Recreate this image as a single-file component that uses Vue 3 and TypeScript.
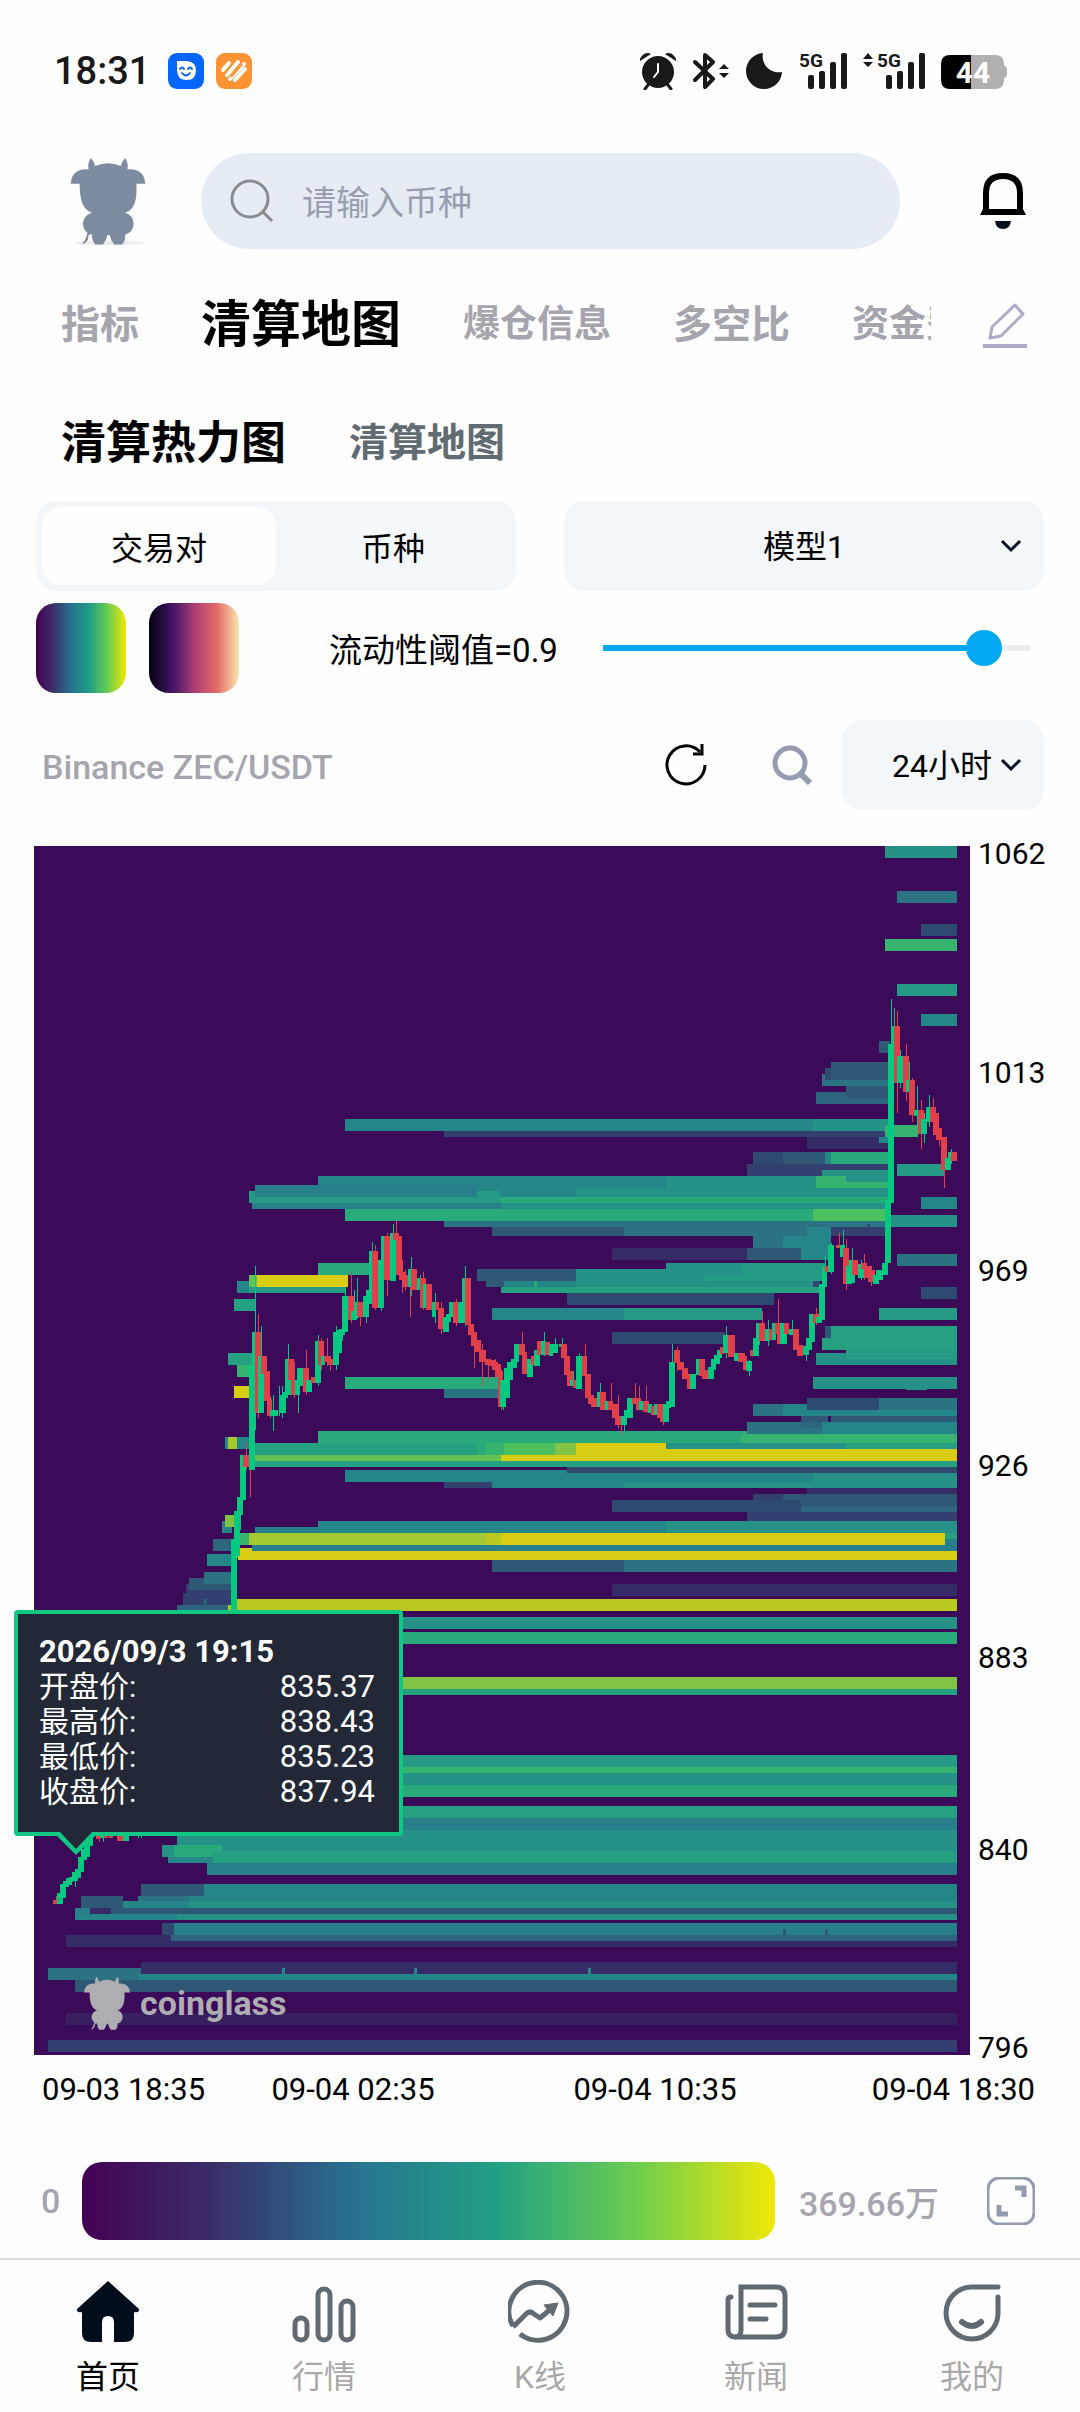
<script setup lang="ts">
import { computed, ref } from 'vue'

type Band = { x: number; y: number; w: number; h: number; fill: string }
type Candle = { x: number; w: number; top: number; bottom: number; high: number; low: number; fill: string }

const cow =
  'M36 2Q42 8 44 16Q67 6 90 16Q92 8 98 2Q104 12 102 22Q132 20 134 48L118 48Q120 80 110 92Q104 99 98 100Q112 104 113 120Q112 136 98 139Q98 152 92 157L78 157Q72 150 70 140L66 140Q64 150 58 157L44 157Q38 150 38 139Q32 138 32 142Q32 154 20 157Q28 148 30 136Q22 130 22 118Q24 104 38 100Q32 99 26 92Q16 80 16 48L0 48Q2 20 32 22Q30 12 36 2Z'

const palette: Record<string, string> = {
  z: '#381f60', a: '#352b66', b: '#333f6f', c: '#2f4a70', d: '#2e5876', D: '#2c657d', e: '#2b7283',
  f: '#277f8b', g: '#25868a', h: '#269186', H: '#259a84', i: '#25a181', j: '#28aa7a', k: '#36b36e',
  l: '#4cc05e', L: '#64c156', m: '#82c346', n: '#a3c832', o: '#b9c820', y: '#d8cd12',
}

// level, left, right, top, bottom
const bandSource = `
h 885 957 846 858;e 897 957 891 903;c 921 957 924 936;k 885 957 939 951;H 897 957 984 996;g 921 957 1014 1026
d 879 890 1041 1053;e 822 890 1074 1086;c 825 890 1068 1080;d 831 890 1062 1080;D 816 890 1092 1104;d 846 890 1086 1098
g 345 813 1119 1131;h 813 888 1119 1131;b 444 888 1131 1137;a 807 888 1137 1149;g 879 888 1137 1143;k 885 918 1125 1137
c 753 783 1152 1164;d 783 825 1152 1164;g 825 831 1152 1164;j 831 888 1152 1164;b 747 888 1164 1176;h 822 888 1170 1182
g 318 666 1176 1188;h 666 888 1176 1188;k 816 846 1176 1188;k 846 888 1182 1188
f 255 477 1185 1197;g 477 576 1188 1197;h 576 888 1188 1197;H 249 500 1191 1203;f 255 477 1185 1197;j 500 888 1197 1203
f 252 501 1203 1209;h 501 888 1203 1209;j 345 813 1209 1221;l 813 885 1209 1221
h 888 957 1215 1227;g 921 957 1197 1209;H 897 945 1164 1176
e 444 885 1221 1227;d 492 624 1227 1236;e 624 807 1227 1236;g 807 831 1227 1260;b 831 885 1227 1236;c 867 870 1224 1227
e 753 783 1236 1248;g 783 831 1236 1248;a 612 747 1248 1260;d 747 801 1248 1260;g 801 828 1248 1260
d 477 576 1269 1281;h 576 826 1269 1281;h 666 741 1263 1275;H 741 826 1263 1281;H 705 741 1275 1281
d 486 504 1281 1287;g 504 576 1281 1287;h 576 813 1281 1287;c 813 820 1281 1287;i 501 820 1287 1293;j 534 537 1281 1287
c 567 774 1293 1305;g 492 624 1308 1320;H 624 762 1308 1320;c 612 725 1332 1344
j 318 370 1263 1275;g 237 249 1281 1293;H 249 346 1287 1293;L 249 257 1275 1287;y 257 348 1275 1287;i 234 256 1299 1311
i 228 252 1353 1365;k 237 249 1365 1377;y 234 249 1386 1398;g 225 252 1437 1449;n 228 237 1437 1449
j 345 500 1377 1389;e 444 500 1389 1398
c 921 957 1287 1299;e 897 957 1254 1266;H 879 957 1308 1320;d 825 831 1326 1338;i 831 957 1326 1350;i 822 957 1338 1350
h 816 957 1353 1365;H 846 957 1350 1359;h 813 957 1377 1389;h 906 927 1389 1390
e 753 783 1404 1416;g 783 957 1404 1416;c 807 879 1398 1410;e 879 957 1398 1410
d 801 828 1416 1428;d 831 957 1416 1422;e 747 822 1422 1434;D 801 825 1422 1428;g 822 957 1422 1434
j 318 747 1431 1443;k 741 957 1434 1443;i 255 477 1443 1455;j 477 486 1443 1455;k 486 504 1443 1455;l 504 555 1443 1455
m 555 576 1443 1455;y 576 666 1443 1461;h 666 846 1443 1449;i 846 957 1443 1449;L 255 501 1455 1461;y 501 666 1455 1461
y 666 957 1449 1461;i 255 957 1461 1467
g 345 567 1470 1482;c 567 957 1467 1473;g 567 813 1473 1482;h 813 957 1473 1482;b 444 492 1482 1488;g 492 624 1482 1488;h 624 957 1482 1488
a 807 957 1488 1494;b 753 783 1494 1506;d 783 957 1494 1506;c 612 801 1500 1512;D 801 957 1506 1512;b 747 957 1512 1521
g 318 666 1521 1533;h 666 957 1521 1533;f 255 318 1527 1533;k 240 249 1533 1545;n 249 486 1533 1545;o 486 501 1533 1545
y 501 945 1533 1545;i 945 957 1533 1539;f 945 957 1539 1551;f 252 945 1545 1551;y 238 252 1548 1560;y 252 957 1551 1560
d 492 624 1560 1572;e 624 957 1560 1572;a 612 957 1584 1596;o 228 957 1599 1611
h 300 957 1617 1629;j 300 957 1632 1644;m 300 957 1677 1689;i 300 957 1689 1695
H 300 957 1755 1767;k 300 957 1767 1773;h 300 957 1773 1785;j 300 957 1785 1797
i 300 957 1806 1818;f 300 957 1818 1830;d 300 957 1830 1836;h 177 957 1830 1851;h 162 177 1845 1857;j 174 222 1845 1857;i 213 957 1851 1863;g 168 213 1857 1863
f 207 957 1863 1875;g 141 957 1884 1902;d 141 204 1884 1896;e 138 189 1896 1902;h 183 957 1902 1908;d 81 123 1896 1908
g 123 189 1901 1908;f 75 90 1908 1914;a 90 111 1908 1914;d 111 957 1908 1914;g 75 177 1914 1920;h 177 957 1914 1920
c 162 174 1923 1935;f 174 957 1923 1935;d 783 786 1929 1935;d 825 828 1929 1935;D 171 957 1935 1941;a 66 171 1935 1947;a 171 957 1941 1947
a 141 957 1962 1974;e 48 141 1968 1980;g 138 957 1974 1980;g 282 285 1968 1974;g 414 417 1968 1974;g 588 591 1968 1974
d 75 957 1980 1992;z 66 957 2013 2025;b 48 957 2040 2052
g 222 232 1521 1533;m 225 234 1515 1527;D 213 231 1539 1551;g 207 231 1554 1566;b 186 231 1584 1596;d 189 231 1578 1590;e 204 231 1572 1584
b 183 231 1593 1605;D 177 228 1605 1612;D 204 207 1599 1605
`

const bands: Band[] = bandSource
  .trim()
  .split(/[;\n]/)
  .map((row) => {
    const [level, left, right, top, bottom] = row.split(' ')
    return { x: +left, y: +top, w: +right - +left, h: +bottom - +top, fill: palette[level] }
  })

// direction, left, right, body top, body bottom, wick top, wick bottom
const candleSource = `
r 53 57 1900 1904 1896 1904;g 57 63 1893 1904;g 60 66 1884 1898;g 63 69 1881 1887;g 66 72 1878 1885;g 69 75 1877 1881 1872 1882;g 72 78 1872 1881 1869 1887;g 75 81 1869 1878
g 78 84 1857 1872;g 81 87 1849 1860;g 84 90 1840 1857;g 87 93 1836 1846;r 96 100 1836 1839 1835 1842;g 100 104 1835 1838 1834 1842;r 104 107 1835 1838;r 109 112 1835 1838;r 117 123 1835 1841;g 123 129 1835 1841;g 138 139 1835 1838
g 231 237 1539 1612;g 234 240 1511 1556 1497 1558;g 237 243 1497 1515 1497 1530;g 240 246 1455 1500;r 243 249 1455 1467 1442 1470;r 247 252 1460 1467 1455 1497;g 249 255 1365 1470
g 252 258 1332 1413 1266 1430;r 255 261 1332 1413 1314 1418;g 258 264 1356 1413 1326 1413;r 261 267 1356 1374;r 264 270 1371 1401;r 267 272 1399 1416 1396 1418
g 270 277 1410 1416 1395 1431;g 276 278 1410 1416 1386 1416;g 279 286 1395 1413 1386 1418;g 282 288 1392 1398;g 285 291 1359 1395 1344 1395;r 288 294 1359 1380;r 291 297 1380 1395 1362 1398
g 295 300 1380 1395 1374 1413;g 297 303 1368 1386;r 303 309 1368 1392 1350 1395;g 306 312 1380 1392;r 311 315 1377 1383;g 315 321 1341 1383 1335 1386;r 318 324 1341 1365 1338 1370;g 321 325 1356 1365
r 324 330 1356 1362 1338 1366;r 327 333 1359 1365 1356 1371;g 333 339 1332 1365 1326 1370;g 336 342 1330 1353;g 339 345 1329 1335 1326 1341;g 342 348 1296 1332 1287 1332
r 348 354 1296 1320 1272 1323;g 351 357 1311 1320 1290 1320;g 354 359 1302 1318 1278 1318;r 357 363 1302 1317 1302 1326;g 363 369 1296 1317 1296 1323;g 366 372 1290 1304
g 369 375 1251 1300 1242 1300;r 372 378 1251 1308 1245 1310;g 378 384 1260 1308 1258 1311;g 381 387 1236 1264;r 384 390 1236 1280 1233 1296;g 390 396 1233 1281 1224 1281;r 393 399 1233 1240 1221 1240
r 396 402 1236 1275;r 399 405 1272 1280 1260 1293;r 402 408 1275 1287 1270 1290;r 407 410 1278 1287 1278 1317;g 408 413 1269 1287 1257 1296;r 411 417 1269 1290;g 417 421 1278 1290 1275 1290
r 420 426 1278 1308 1272 1310;g 423 428 1284 1308;r 426 432 1284 1310;g 432 436 1302 1317 1293 1323;r 435 439 1302 1310;r 438 444 1308 1329 1302 1334;g 443 449 1317 1332;g 446 451 1314 1322
g 449 455 1302 1317;r 453 459 1302 1323 1299 1326;g 458 464 1302 1323;g 462 468 1278 1323 1266 1326;r 465 471 1278 1325;r 468 474 1324 1335;r 471 477 1332 1346 1332 1368;r 475 481 1340 1352
r 479 486 1350 1362 1344 1386;r 485 491 1359 1365 1359 1380;r 489 495 1360 1366;r 492 498 1362 1370 1359 1378;r 495 501 1364 1377;r 498 503 1371 1407 1370 1410;g 500 506 1380 1407 1380 1410
g 504 510 1368 1398;g 507 513 1362 1380;g 511 517 1359 1368;g 514 519 1344 1362;r 519 525 1344 1355 1332 1368;r 522 527 1352 1374;g 527 533 1359 1377;r 531 534 1356 1365;g 534 540 1350 1366;r 537 543 1341 1355
g 541 546 1341 1355 1332 1356;r 545 550 1342 1355;g 549 553 1344 1356;g 552 558 1344 1353 1338 1353;g 559 563 1344 1347 1338 1350;r 561 567 1344 1358;r 564 570 1356 1375;r 567 573 1371 1386
g 570 574 1380 1386 1371 1386;r 573 577 1380 1388;g 576 582 1356 1389 1353 1389;g 579 584 1356 1372;r 582 587 1356 1376 1344 1380;r 585 591 1374 1398;r 588 594 1395 1404;r 591 597 1398 1407
g 597 602 1392 1407 1383 1407;r 600 606 1392 1410;g 605 609 1401 1410;r 608 613 1401 1410 1383 1410;r 612 618 1404 1418;r 615 621 1416 1425 1395 1428;r 618 622 1416 1425 1416 1434;g 621 627 1416 1425 1410 1431
g 625 632 1410 1418;g 627 633 1398 1418;r 632 638 1398 1404 1383 1404;r 636 641 1398 1410 1386 1410;g 639 644 1401 1410;r 643 649 1401 1412 1386 1413;g 648 652 1404 1413;r 651 656 1406 1415
g 654 657 1404 1415;r 657 663 1404 1418;r 660 665 1410 1422 1404 1425;g 663 669 1404 1422;g 666 671 1401 1408;g 669 675 1362 1407 1344 1407;r 674 680 1350 1363 1347 1371;r 678 684 1362 1370
r 682 688 1368 1379;r 687 692 1374 1389;g 690 696 1374 1389;g 696 701 1359 1375;r 699 705 1359 1376;r 702 708 1370 1379;g 708 714 1367 1379;g 711 716 1359 1370;g 714 720 1355 1364
g 717 722 1350 1358;r 720 724 1347 1354;g 723 729 1335 1353 1326 1358;r 728 735 1335 1357;g 734 738 1353 1361;r 738 745 1353 1362;r 743 747 1356 1370;g 746 752 1361 1371 1360 1376;r 750 753 1350 1356
g 753 759 1338 1356;g 756 760 1323 1345;r 759 765 1323 1341 1311 1341;g 765 770 1329 1341 1320 1346;r 769 773 1329 1340;g 772 776 1323 1340;r 775 779 1323 1334 1299 1344;r 777 783 1323 1344
g 780 787 1323 1344;r 784 789 1323 1334;g 789 794 1329 1335 1320 1335;r 793 799 1329 1350;r 797 803 1345 1356;g 803 809 1346 1355 1340 1361;g 806 812 1338 1350;g 809 815 1314 1342
r 813 819 1314 1323 1308 1325;g 816 822 1317 1323;g 819 825 1284 1320;g 822 827 1266 1287 1255 1287;r 825 829 1266 1272;g 828 834 1245 1272 1243 1274;r 836 843 1245 1248 1233 1248;g 840 845 1245 1257 1230 1257
r 843 849 1248 1284 1239 1290;g 846 852 1266 1284;g 849 855 1260 1283 1248 1283;r 852 858 1260 1275;g 858 864 1264 1278 1260 1280;r 861 867 1263 1269 1254 1280;r 864 872 1266 1278;r 868 875 1270 1282 1268 1286
g 873 879 1275 1284;g 876 883 1270 1280;g 882 888 1263 1275;g 885 891 1200 1263;g 888 894 1044 1203 999 1203;g 891 897 1026 1044 1008 1044;r 894 900 1026 1083 1011 1113;g 897 903 1056 1083 1050 1088
r 903 909 1056 1092 1044 1101;g 906 910 1080 1092 1062 1092;r 909 915 1080 1115 1078 1122;g 914 918 1110 1116 1086 1125;r 918 924 1110 1134 1100 1149;g 921 927 1119 1134 1113 1143;g 926 932 1107 1122 1095 1127
r 930 936 1107 1122 1098 1129;r 933 939 1113 1135;r 936 942 1128 1140 1128 1146;r 941 947 1137 1170 1137 1188;g 945 951 1158 1170;g 948 954 1152 1158 1149 1164;r 951 957 1152 1161
`

const candles: Candle[] = candleSource
  .trim()
  .split(/[;\n]/)
  .map((row) => {
    const [direction, ...values] = row.split(' ')
    const [left, right, top, bottom, high = top, low = bottom] = values.map(Number)
    return { x: left, w: right - left, top, bottom, high, low, fill: direction === 'g' ? '#05c981' : '#e0404a' }
  })

const prices = [
  { label: '1062', y: 864 },
  { label: '1013', y: 1083 },
  { label: '969', y: 1281 },
  { label: '926', y: 1476 },
  { label: '883', y: 1668 },
  { label: '840', y: 1860 },
  { label: '796', y: 2058 },
]

const times = [
  { label: '09-03 18:35', x: 42, anchor: 'start' },
  { label: '09-04 02:35', x: 353, anchor: 'middle' },
  { label: '09-04 10:35', x: 655, anchor: 'middle' },
  { label: '09-04 18:30', x: 1035, anchor: 'end' },
]

const tooltip = [
  { label: '开盘价:', value: '835.37' },
  { label: '最高价:', value: '838.43' },
  { label: '最低价:', value: '835.23' },
  { label: '收盘价:', value: '837.94' },
]

const mode = ref('pair')
const model = ref('1')
const period = ref('24')
const threshold = ref(0.9)
const trackFill = computed(() => `${Math.round(threshold.value * 100)}%`)
</script>

<template>
  <div class="page">
    <div class="status">
      <span class="clock">18:31</span>
      <svg class="app-icon" viewBox="0 0 36 36" aria-hidden="true">
        <rect width="36" height="36" rx="9" fill="#0564fa" />
        <path d="M9 8H19Q28 9 28 17Q28 27 19 27Q9 27 9 17Z" fill="#fff" />
        <path d="M12 16Q14 13 16 16M20 16Q22 13 24 16M14 20Q18 25 22 20" fill="none" stroke="#0564fa" stroke-width="2" stroke-linecap="round" />
      </svg>
      <svg class="app-icon" viewBox="0 0 36 36" aria-hidden="true">
        <rect width="36" height="36" rx="9" fill="#ff9232" />
        <path d="M7 17L13 10M11 22L22 9M14 26L28 11M19 27L29 16" fill="none" stroke="#fff" stroke-width="4" stroke-linecap="round" />
        <path d="M9 20L17 10M15 24L26 11" fill="none" stroke="#ff9232" stroke-width="2" />
      </svg>
      <div class="status-icons" aria-hidden="true">
        <svg width="38" height="38" viewBox="0 0 38 38" fill="#191919">
          <circle cx="19" cy="20" r="16" />
          <path d="M1 9Q0 6 5 2Q9 0 12 2ZM37 9Q38 6 33 2Q29 0 26 2Z" />
          <path d="M9 33L6 37M29 33L32 37" stroke="#191919" stroke-width="3" stroke-linecap="round" />
          <path d="M19 12V20L15 25" fill="none" stroke="#fff" stroke-width="2" stroke-linecap="round" />
        </svg>
        <svg width="36" height="38" viewBox="0 0 36 38">
          <path d="M2 10L20 27L12 35V3L20 10L2 28" fill="none" stroke="#191919" stroke-width="4" stroke-linejoin="round" stroke-linecap="round" />
          <path d="M31 12L36 17H26ZM31 26L26 21H36Z" fill="#191919" />
        </svg>
        <svg width="38" height="38" viewBox="0 0 38 38"><path d="M18 1A16 16 0 0 0 37 20A18 18 0 1 1 18 1Z" fill="#191919" /></svg>
        <svg width="48" height="46" viewBox="0 -4 48 46" fill="#191919">
          <text class="net" x="0" y="15">5G</text>
          <rect x="9" y="23" width="6" height="14" rx="2" /><rect x="20" y="19" width="6" height="18" rx="2" />
          <rect x="31" y="10" width="6" height="27" rx="2" /><rect x="42" y="1" width="6" height="36" rx="2" />
        </svg>
        <svg width="62" height="46" viewBox="0 -4 62 46" fill="#191919">
          <path d="M5 1L10 7H0ZM5 15L0 10H10Z" />
          <text class="net" x="14" y="15">5G</text>
          <rect x="23" y="23" width="6" height="14" rx="2" /><rect x="34" y="19" width="6" height="18" rx="2" />
          <rect x="45" y="10" width="6" height="27" rx="2" /><rect x="56" y="1" width="6" height="36" rx="2" />
        </svg>
        <svg width="66" height="38" viewBox="0 0 66 38">
          <path d="M30 3H54Q63 3 63 12V14Q66 14 66 18V22Q66 25 63 26V28Q63 37 54 37H30Z" fill="#b0b0b0" />
          <path d="M30 3H9Q0 3 0 12V28Q0 37 9 37H30Z" fill="#000" />
          <text class="charge" x="32" y="31" text-anchor="middle">44</text>
        </svg>
      </div>
    </div>

    <header class="header">
      <svg class="logo" viewBox="0 0 134 158" aria-hidden="true">
        <ellipse cx="70" cy="154" rx="64" ry="4" fill="#ececec" />
        <path :d="cow" fill="#7e8aa0" />
      </svg>
      <label class="search">
        <svg width="44" height="44" viewBox="0 0 44 44" aria-hidden="true">
          <circle cx="20" cy="20" r="18" fill="none" stroke="#8b8b8b" stroke-width="3" />
          <path d="M33 33L42 42" stroke="#8b8b8b" stroke-width="3" />
        </svg>
        <input type="search" placeholder="请输入币种" aria-label="请输入币种" />
      </label>
      <button class="icon-button bell" aria-label="通知">
        <svg width="46" height="56" viewBox="0 0 46 56">
          <path d="M6 39V20Q6 3 23 3Q40 3 40 20V39" fill="none" stroke="#000" stroke-width="6" />
          <path d="M3 36H43L46 42H0Z" fill="#000" />
          <path d="M15 48H31Q30 56 23 56Q16 56 15 48Z" fill="#020d1d" />
        </svg>
      </button>
    </header>

    <nav class="tabs">
      <div class="tab-strip">
        <a href="#" class="tab">指标</a>
        <a href="#" class="tab active">清算地图</a>
        <a href="#" class="tab long">爆仓信息</a>
        <a href="#" class="tab">多空比</a>
        <a href="#" class="tab long">资金费率</a>
      </div>
      <button class="icon-button" aria-label="编辑">
        <svg width="46" height="48" viewBox="0 0 46 48" fill="none" stroke="#adabcb" stroke-width="3">
          <path d="M33 4L41 13L19 35L8 37L10 26Z" stroke-linejoin="round" />
          <path d="M1 45H45" stroke-width="4" />
        </svg>
      </button>
    </nav>

    <nav class="subtabs">
      <a href="#" class="subtab active">清算热力图</a>
      <a href="#" class="subtab">清算地图</a>
    </nav>

    <div class="controls">
      <div class="segment">
        <button :class="{ on: mode === 'pair' }" @click="mode = 'pair'">交易对</button>
        <button :class="{ on: mode === 'coin' }" @click="mode = 'coin'">币种</button>
      </div>
      <div class="picker model">
        <select v-model="model" aria-label="模型">
          <option value="1">模型1</option>
          <option value="2">模型2</option>
        </select>
        <svg width="22" height="14" viewBox="0 0 22 14" aria-hidden="true"><path d="M2 2L11 11L20 2" fill="none" stroke="#061024" stroke-width="3" /></svg>
      </div>
    </div>

    <div class="threshold">
      <button class="swatch viridis" aria-label="绿色配色"></button>
      <button class="swatch magma" aria-label="橙色配色"></button>
      <label for="threshold">流动性阈值={{ threshold }}</label>
      <input id="threshold" v-model.number="threshold" type="range" min="0" max="1" step="0.1" :style="{ '--fill': trackFill }" />
    </div>

    <div class="symbol">
      <span class="pair">Binance ZEC/USDT</span>
      <button class="icon-button" aria-label="刷新">
        <svg width="42" height="44" viewBox="0 0 42 44" fill="none" stroke="#000" stroke-width="3">
          <path d="M40 22A19 19 0 1 1 35 9" /><path d="M37 1V11H28" />
        </svg>
      </button>
      <button class="icon-button lens" aria-label="搜索">
        <svg width="40" height="40" viewBox="0 0 40 40" fill="none" stroke="#949ab0" stroke-width="5">
          <circle cx="18" cy="18" r="15" /><path d="M28 28L38 38" stroke-width="6" />
        </svg>
      </button>
      <div class="picker period">
        <select v-model="period" aria-label="周期">
          <option value="24">24小时</option>
          <option value="48">48小时</option>
        </select>
        <svg width="22" height="14" viewBox="0 0 22 14" aria-hidden="true"><path d="M2 2L11 11L20 2" fill="none" stroke="#061024" stroke-width="3" /></svg>
      </div>
    </div>

    <section class="chart">
      <svg class="plot" viewBox="0 822 1080 1292">
        <rect x="34" y="846" width="936" height="1209" fill="#3b0b59" />
        <g shape-rendering="crispEdges">
          <rect v-for="(band, i) in bands" :key="'b' + i" :x="band.x" :y="band.y" :width="band.w" :height="band.h" :fill="band.fill" />
          <template v-for="(candle, i) in candles" :key="'c' + i">
            <rect :x="candle.x + 3" :y="candle.high" width="1" :height="candle.low - candle.high" :fill="candle.fill" />
            <rect :x="candle.x" :y="candle.top" :width="candle.w" :height="candle.bottom - candle.top" :fill="candle.fill" />
          </template>
        </g>
        <svg x="84" y="1976" width="46" height="54" viewBox="0 0 134 158"><path :d="cow" fill="#aeadb1" /></svg>
        <text class="brand" x="140" y="2015">coinglass</text>
        <text v-for="price in prices" :key="price.label" class="price" x="978" :y="price.y">{{ price.label }}</text>
        <text v-for="time in times" :key="time.label" class="time" :x="time.x" y="2100" :text-anchor="time.anchor">{{ time.label }}</text>
      </svg>
      <div class="tooltip">
        <strong>2026/09/3 19:15</strong>
        <dl>
          <div v-for="row in tooltip" :key="row.label">
            <dt>{{ row.label }}</dt>
            <dd>{{ row.value }}</dd>
          </div>
        </dl>
        <svg class="pointer" width="38" height="23" viewBox="0 0 38 23" aria-hidden="true">
          <path d="M0 0H38V4L19 23L0 4Z" fill="#10c784" /><path d="M3 0H35L19 17Z" fill="#222836" />
        </svg>
      </div>
    </section>

    <div class="legend">
      <span>0</span>
      <div class="scale"></div>
      <span class="max">369.66万</span>
      <button class="icon-button" aria-label="全屏">
        <svg width="48" height="48" viewBox="0 0 48 48" fill="none" stroke="#949ab0">
          <rect x="1" y="1" width="46" height="46" rx="11" stroke-width="3" />
          <path d="M28 11H37V20M12 28V37H21" stroke-width="5" />
        </svg>
      </button>
    </div>

    <nav class="bottom">
      <a href="#" class="current">
        <svg width="64" height="64" viewBox="0 0 64 64" fill="#020d1b">
          <path d="M32 1L63 29Q64 33 58 32V53Q58 62 49 62H38V42Q38 36 32 36Q26 36 26 42V62H15Q6 62 6 53V32Q0 33 1 29Z" />
        </svg>
        <span>首页</span>
      </a>
      <a href="#">
        <svg width="64" height="64" viewBox="0 0 64 64" fill="none" stroke="#616a71" stroke-width="5">
          <rect x="3" y="38" width="12" height="22" rx="6" /><rect x="26" y="9" width="12" height="51" rx="6" /><rect x="49" y="21" width="12" height="39" rx="6" />
        </svg>
        <span>行情</span>
      </a>
      <a href="#">
        <svg width="64" height="64" viewBox="0 0 64 64" fill="none" stroke="#616a71" stroke-width="5" stroke-linejoin="round">
          <path d="M5 46A29 29 0 1 1 12 54" /><path d="M5 47L18 34Q22 30 26 34L32 38L44 28" />
          <path d="M36 25L50 23L45 36Z" fill="#616a71" stroke-width="1" />
        </svg>
        <span>K线</span>
      </a>
      <a href="#">
        <svg width="64" height="64" viewBox="0 0 64 64" fill="none" stroke="#616a71" stroke-width="5" stroke-linecap="round">
          <path d="M17 7H52Q61 7 61 16V48Q61 57 52 57H11Q17 57 17 50Z" /><path d="M12 57Q4 57 4 50V20Q4 17 7 17" /><path d="M26 25H51M26 39H42" />
        </svg>
        <span>新闻</span>
      </a>
      <a href="#">
        <svg width="64" height="64" viewBox="0 0 64 64" fill="none" stroke="#616a71" stroke-width="5" stroke-linecap="round">
          <path d="M58 7H31A26 26 0 1 0 58 34V17" /><path d="M22 42Q32 50 41 42" stroke-width="6" />
        </svg>
        <span>我的</span>
      </a>
    </nav>
  </div>
</template>

<style>
body {
  background: #fefefe;
}
</style>

<style scoped>
.page {
  font-family: Roboto, 'Noto Sans CJK SC', sans-serif;
  font-size: 32px;
  color: #000;
  background: #fefefe;
}
.page * {
  box-sizing: border-box;
}
a {
  text-decoration: none;
}
button,
input,
select {
  font: inherit;
  color: inherit;
  border: 0;
  background: none;
  padding: 0;
  margin: 0;
}
svg {
  display: block;
  flex: none;
}
.icon-button {
  display: flex;
  flex: none;
}
.status {
  display: flex;
  align-items: center;
  height: 141px;
  padding: 0 73px 0 54px;
}
.clock {
  font-size: 38px;
  font-weight: 500;
  color: #191919;
  margin-right: 18px;
}
.app-icon {
  width: 36px;
  height: 36px;
  margin-right: 12px;
}
.status-icons {
  display: flex;
  align-items: center;
  gap: 16px;
  margin-left: auto;
}
.net {
  font-size: 19px;
  font-weight: 700;
}
.charge {
  font-size: 30px;
  font-weight: 700;
  fill: #fff;
}
.header {
  display: flex;
  align-items: center;
  padding: 12px 54px 0 69px;
}
.logo {
  width: 78px;
  height: 88px;
}
.search {
  flex: 1;
  display: flex;
  align-items: center;
  height: 96px;
  margin: 0 80px 0 54px;
  padding: 0 29px;
  border-radius: 48px;
  background: #e5ecf4;
}
.search input {
  flex: 1;
  min-width: 0;
  margin-left: 28px;
  padding-top: 4px;
  font-size: 34px;
  outline: none;
}
.search input::placeholder {
  color: #989eaf;
  opacity: 1;
}
.tabs {
  display: flex;
  align-items: center;
  justify-content: space-between;
  height: 80px;
  margin-top: 36px;
  padding: 0 52px 0 61px;
}
.tab-strip {
  display: flex;
  align-items: center;
  gap: 62px;
  width: 870px;
  overflow: hidden;
}
.tab {
  flex: none;
  font-size: 39px;
  font-weight: 700;
  line-height: 72px;
  color: #a6a5ae;
}
.tab.long {
  font-size: 37px;
}
.tab.active {
  font-size: 50px;
  color: #000;
}
.subtabs {
  display: flex;
  align-items: center;
  gap: 63px;
  height: 100px;
  margin-top: 24px;
  padding: 0 61px;
  font-weight: 700;
}
.subtab {
  font-size: 39px;
  color: #616b72;
}
.subtab.active {
  font-size: 45px;
  color: #000;
}
.controls {
  display: grid;
  grid-template-columns: 1fr 1fr;
  gap: 48px;
  margin-top: 12px;
  padding: 0 36px;
}
.segment,
.picker {
  height: 90px;
  border-radius: 20px;
  background: #f3f7fa;
}
.segment {
  display: flex;
  padding: 6px;
}
.segment button {
  flex: 1;
  border-radius: 20px;
}
.segment button.on {
  background: #fefefe;
}
.picker {
  display: grid;
  align-items: center;
}
.picker select,
.picker svg {
  grid-area: 1 / 1;
}
.picker select {
  width: 100%;
  height: 90px;
  padding-top: 2px;
  appearance: none;
}
.picker svg {
  justify-self: end;
  margin-right: 22px;
  pointer-events: none;
}
.model select {
  text-align: center;
  text-align-last: center;
}
.threshold {
  display: flex;
  align-items: center;
  margin-top: 12px;
  padding: 0 36px;
}
.swatch {
  flex: none;
  width: 90px;
  height: 90px;
  border-radius: 20px;
}
.viridis,
.scale {
  background: linear-gradient(90deg, #440154, #3b2c68 18%, #277490 40%, #21a184 60%, #6ccd4f 80%, #f0e806);
}
.magma {
  margin-left: 23px;
  background: linear-gradient(90deg, #02020f, #45156b 27%, #b13f74 52%, #e46d69 76%, #fae5b0);
}
.threshold label {
  margin-left: 90px;
  font-size: 33px;
}
.threshold input {
  flex: 1;
  min-width: 0;
  margin-left: 32px;
  height: 40px;
  appearance: none;
  background: linear-gradient(90deg, #04a9f6 var(--fill), #ededed var(--fill)) center / calc(100% - 26px) 6px no-repeat;
}
.threshold input::-webkit-slider-thumb {
  appearance: none;
  width: 36px;
  height: 36px;
  border-radius: 50%;
  background: #04a9f6;
}
.symbol {
  display: flex;
  align-items: center;
  margin-top: 27px;
  padding: 0 36px 0 42px;
}
.pair {
  flex: 1;
  padding-top: 4px;
  font-size: 34px;
  font-weight: 500;
  color: #a6a5ae;
}
.lens {
  margin: 0 30px 0 65px;
}
.period {
  width: 202px;
}
.period select {
  padding-left: 50px;
}
.chart {
  position: relative;
  margin-top: 12px;
}
.plot {
  width: 100%;
  height: auto;
}
.price {
  font-size: 30px;
}
.time {
  font-size: 31px;
}
.brand {
  font-size: 34px;
  font-weight: 700;
  fill: #aeadb1;
}
.tooltip {
  position: absolute;
  top: 61%;
  left: 14px;
  width: 389px;
  padding: 20px 24px 23px 21px;
  border: 4px solid #10c784;
  border-radius: 4px;
  background: #222836;
  color: #fff;
  font-size: 31px;
  line-height: 35px;
}
.tooltip strong {
  display: block;
}
.tooltip dl,
.tooltip dd {
  margin: 0;
}
.tooltip dl div {
  display: flex;
  justify-content: space-between;
  height: 35px;
}
.tooltip dt {
  font-size: 30px;
}
.pointer {
  position: absolute;
  top: 100%;
  left: 39px;
}
.legend {
  display: flex;
  align-items: center;
  margin-top: 48px;
  padding: 0 45px 0 41px;
  font-size: 34px;
  font-weight: 500;
  color: #a6a5ae;
}
.scale {
  flex: 1;
  height: 78px;
  margin: 0 24px 0 22px;
  border-radius: 20px;
}
.max {
  margin-right: 48px;
}
.bottom {
  display: flex;
  margin-top: 18px;
  padding: 20px 0 9px;
  border-top: 2px solid #dcdcdc;
}
.bottom a {
  flex: 1;
  display: flex;
  flex-direction: column;
  align-items: center;
  gap: 9px;
  line-height: 48px;
  color: #a9a9a9;
}
.bottom .current {
  color: #000;
}
</style>
